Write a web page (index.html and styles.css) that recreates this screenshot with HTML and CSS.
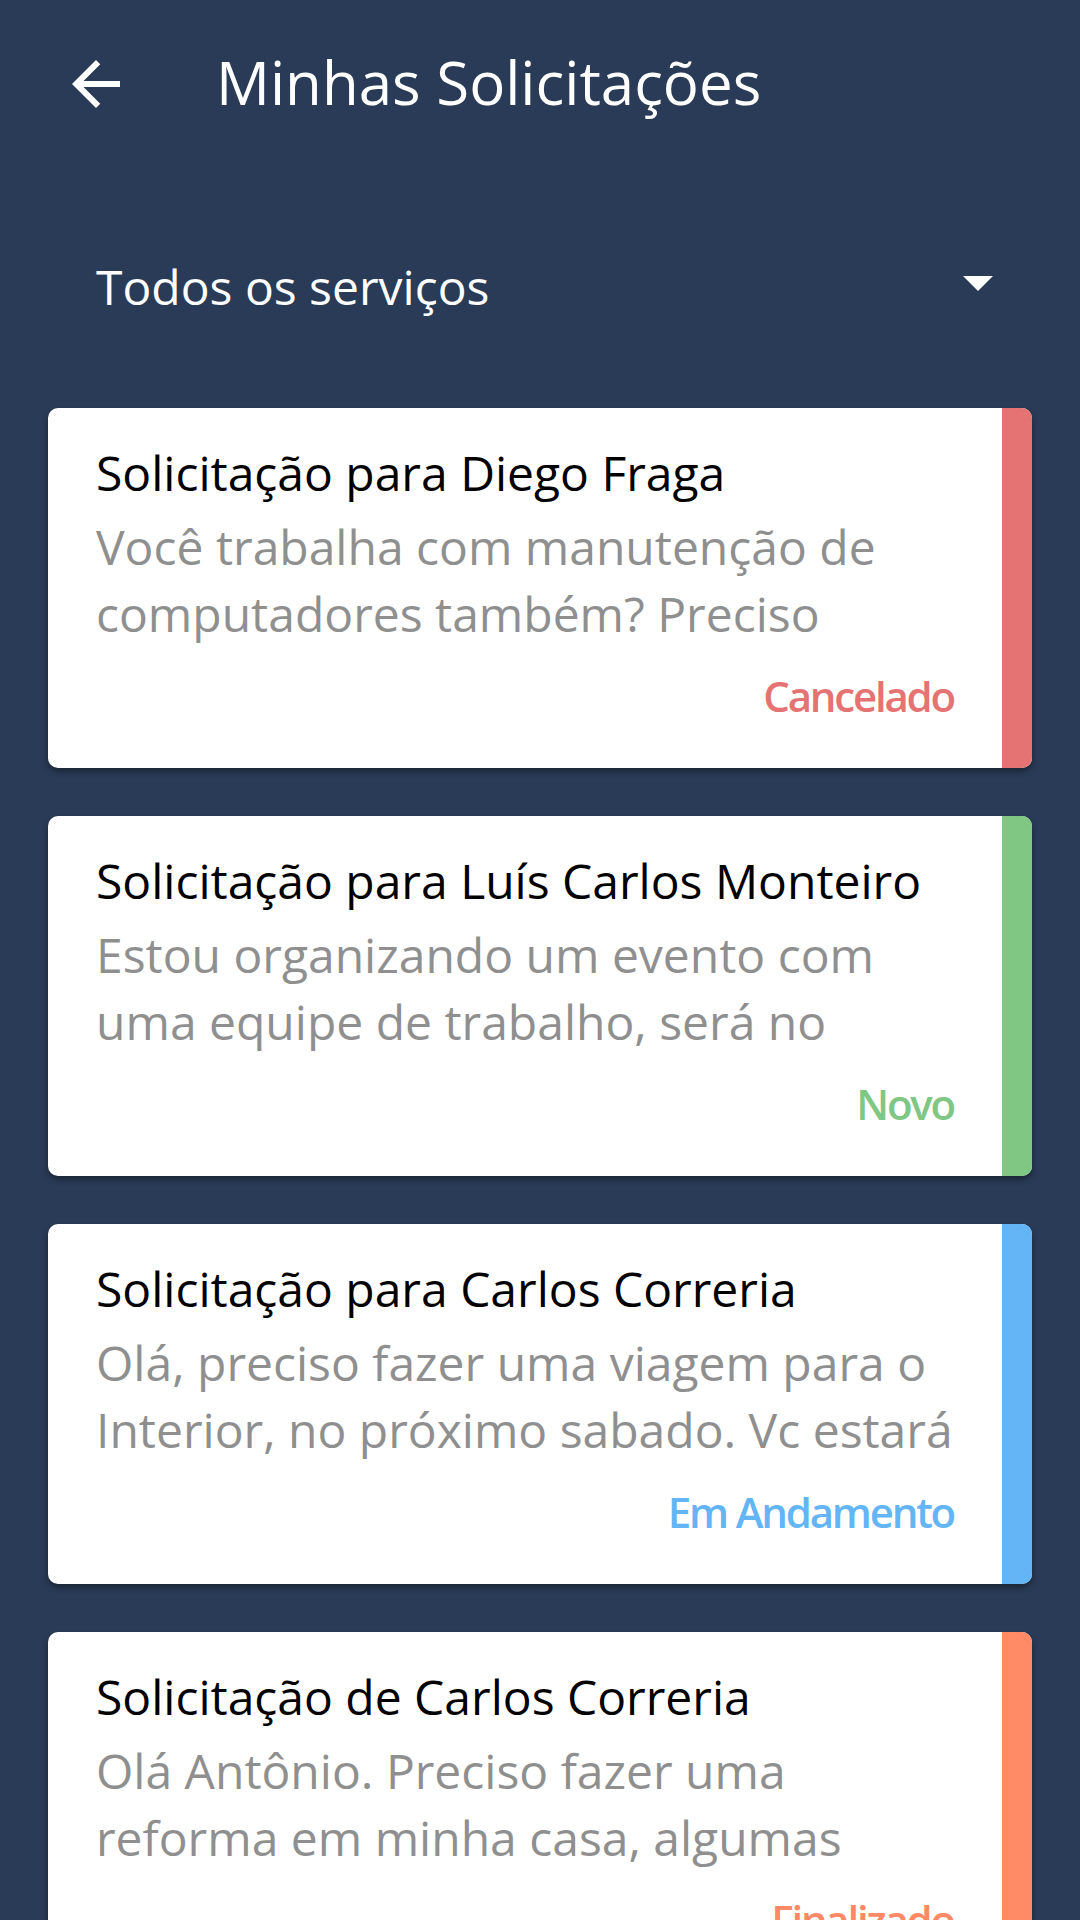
FILE: index.html
```html
<!DOCTYPE html>
<html lang="pt-BR">
<head>
<meta charset="utf-8">
<title>Minhas Solicitações</title>
<link rel="stylesheet" href="styles.css">
</head>
<body>
<header class="toolbar">
  <button class="back" aria-label="Voltar">
    <svg viewBox="0 0 24 24" width="72" height="72"><path fill="#fff" d="M20 11H7.83l5.59-5.59L12 4l-8 8 8 8 1.41-1.41L7.83 13H20v-2z"/></svg>
  </button>
  <h1 class="title">Minhas Solicitações</h1>
</header>

<div class="spinner">
  <span class="spinner-text">Todos os serviços</span>
  <span class="spinner-arrow"></span>
</div>

<main class="list">
  <article class="card">
    <div class="card-body">
      <h2 class="card-title">Solicitação para Diego Fraga</h2>
      <p class="card-desc">Você trabalha com manutenção de computadores também? Preciso</p>
      <div class="card-status status-red">Cancelado</div>
    </div>
    <div class="stripe stripe-red"></div>
  </article>

  <article class="card">
    <div class="card-body">
      <h2 class="card-title">Solicitação para Luís Carlos Monteiro</h2>
      <p class="card-desc">Estou organizando um evento com uma equipe de trabalho, será no</p>
      <div class="card-status status-green">Novo</div>
    </div>
    <div class="stripe stripe-green"></div>
  </article>

  <article class="card">
    <div class="card-body">
      <h2 class="card-title">Solicitação para Carlos Correria</h2>
      <p class="card-desc">Olá, preciso fazer uma viagem para o Interior, no próximo sabado. Vc estará</p>
      <div class="card-status status-blue">Em Andamento</div>
    </div>
    <div class="stripe stripe-blue"></div>
  </article>

  <article class="card">
    <div class="card-body">
      <h2 class="card-title">Solicitação de Carlos Correria</h2>
      <p class="card-desc">Olá Antônio. Preciso fazer uma reforma em minha casa, algumas</p>
      <div class="card-status status-orange">Finalizado</div>
    </div>
    <div class="stripe stripe-orange"></div>
  </article>
</main>
</body>
</html>
```

FILE: styles.css
```css
html, body {
  margin: 0;
  padding: 0;
  height: 1920px;
  overflow: hidden;
}

body {
  background: #293b57;
  font-family: "Open Sans", "Noto Sans", sans-serif;
  color: #fff;
}

.toolbar {
  height: 168px;
  display: flex;
  align-items: center;
  padding-left: 60px;
  box-sizing: border-box;
}

.back {
  width: 72px;
  height: 72px;
  padding: 0;
  margin: 0;
  border: 0;
  background: none;
  display: flex;
}

.title {
  margin: 0 0 0 84px;
  font-size: 60px;
  font-weight: 400;
  line-height: 82px;
  position: relative;
  top: -2px;
}

.spinner {
  margin: 48px 48px 0;
  height: 144px;
  padding: 0 39px 0 48px;
  display: flex;
  align-items: center;
  justify-content: space-between;
}

.spinner-text {
  font-size: 48px;
  line-height: 66px;
  margin-top: -3px;
}

.spinner-arrow {
  width: 0;
  height: 0;
  border-left: 15px solid transparent;
  border-right: 15px solid transparent;
  border-top: 15px solid #fff;
  margin-bottom: 9px;
}

.list {
  margin: 48px 48px 0;
  display: flex;
  flex-direction: column;
  gap: 48px;
}

.card {
  height: 360px;
  flex: none;
  display: flex;
  background: #fff;
  border-radius: 10px;
  overflow: hidden;
  box-shadow: 0 4px 6px rgba(0, 0, 0, 0.35);
}

.card-body {
  flex: 1;
  min-width: 0;
  display: flex;
  flex-direction: column;
  padding: 32px 48px 44px 48px;
}

.card-title {
  margin: 0;
  font-size: 48px;
  font-weight: 400;
  line-height: 66px;
  color: #000;
  white-space: nowrap;
}

.card-desc {
  margin: 7px -10px 0 0;
  font-size: 48px;
  line-height: 67px;
  max-height: 134px;
  overflow: hidden;
  color: #8f8f8f;
}

.card-status {
  margin-top: auto;
  text-align: right;
  font-size: 42px;
  font-weight: 600;
  line-height: 57px;
  letter-spacing: -2.2px;
}

.stripe {
  width: 30px;
  flex: none;
}

.status-red { color: #e57373; }
.status-green { color: #81c784; }
.status-blue { color: #64b5f6; }
.status-orange { color: #ff8a65; }

.stripe-red { background: #e57373; }
.stripe-green { background: #81c784; }
.stripe-blue { background: #64b5f6; }
.stripe-orange { background: #ff8a65; }
```
